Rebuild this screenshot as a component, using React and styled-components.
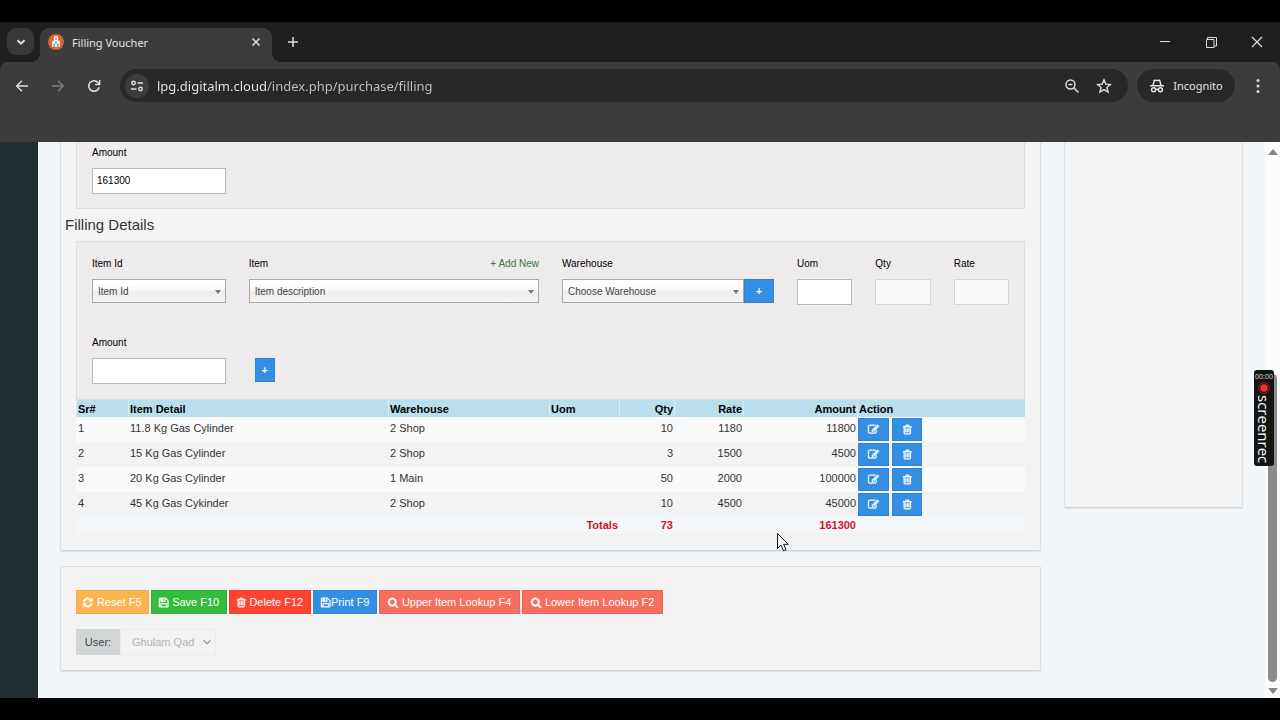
import React from "react";
import styled, { createGlobalStyle, css } from "styled-components";

const Global = createGlobalStyle`
  * { box-sizing: border-box; }
  body { margin: 0; background: #000; font-family: "Liberation Sans", Arial, sans-serif; }
  button, input, select { font-family: inherit; margin: 0; }
  button { cursor: pointer; }
`;

const uiFont = `"Noto Sans", "Open Sans", sans-serif`;

/* ---------- Icons ---------- */

const GLYPHS = {
  search: [1664, "M1152 704q0 185 -131.5 316.5t-316.5 131.5t-316.5 -131.5t-131.5 -316.5t131.5 -316.5t316.5 -131.5t316.5 131.5t131.5 316.5zM1664 -128q0 -52 -38 -90t-90 -38q-54 0 -90 38l-343 342q-179 -124 -399 -124q-143 0 -273.5 55.5t-225 150t-150 225t-55.5 273.5 t55.5 273.5t150 225t225 150t273.5 55.5t273.5 -55.5t225 -150t150 -225t55.5 -273.5q0 -220 -124 -399l343 -343q37 -37 37 -90z"],
  trash: [1408, "M512 800v-576q0 -14 -9 -23t-23 -9h-64q-14 0 -23 9t-9 23v576q0 14 9 23t23 9h64q14 0 23 -9t9 -23zM768 800v-576q0 -14 -9 -23t-23 -9h-64q-14 0 -23 9t-9 23v576q0 14 9 23t23 9h64q14 0 23 -9t9 -23zM1024 800v-576q0 -14 -9 -23t-23 -9h-64q-14 0 -23 9t-9 23v576q0 14 9 23t23 9h64q14 0 23 -9t9 -23zM1152 76v948h-896v-948q0 -22 7 -40.5t14.5 -27t10.5 -8.5h832q3 0 10.5 8.5t14.5 27t7 40.5zM480 1152h448l-48 117q-7 9 -17 11h-317q-10 -2 -17 -11zM1408 1120v-64q0 -14 -9 -23t-23 -9h-96v-948q0 -83 -47 -143.5t-113 -60.5h-832q-66 0 -113 58.5t-47 141.5v952h-96q-14 0 -23 9t-9 23v64q0 14 9 23t23 9h309l70 167q15 37 54 63t79 26h320q40 0 79 -26t54 -63l70 -167h309q14 0 23 -9t9 -23z"],
  edit: [1792, "M888 352l116 116l-152 152l-116 -116v-56h96v-96h56zM1328 1072q-16 16 -33 -1l-350 -350q-17 -17 -1 -33t33 1l350 350q17 17 1 33zM1408 478v-190q0 -119 -84.5 -203.5t-203.5 -84.5h-832q-119 0 -203.5 84.5t-84.5 203.5v832q0 119 84.5 203.5t203.5 84.5h832q63 0 117 -25q15 -7 18 -23q3 -17 -9 -29l-49 -49q-14 -14 -32 -8q-23 6 -45 6h-832q-66 0 -113 -47t-47 -113v-832q0 -66 47 -113t113 -47h832q66 0 113 47t47 113v126q0 13 9 22l64 64q15 15 35 7t20 -29zM1312 1216l288 -288l-672 -672h-288v288zM1756 1084l-92 -92l-288 288l92 92q28 28 68 28t68 -28l152 -152q28 -28 28 -68t-28 -68z"],
  save: [1536, "M384 0h768v384h-768v-384zM1280 0h128v896q0 14 -10 38.5t-20 34.5l-281 281q-10 10 -34 20t-39 10v-416q0 -40 -28 -68t-68 -28h-576q-40 0 -68 28t-28 68v416h-128v-1280h128v416q0 40 28 68t68 28h832q40 0 68 -28t28 -68v-416zM896 928v320q0 13 -9.5 22.5t-22.5 9.5h-192q-13 0 -22.5 -9.5t-9.5 -22.5v-320q0 -13 9.5 -22.5t22.5 -9.5h192q13 0 22.5 9.5t9.5 22.5zM1536 896v-928q0 -40 -28 -68t-68 -28h-1344q-40 0 -68 28t-28 68v1344q0 40 28 68t68 28h928q40 0 88 -20t76 -48l280 -280q28 -28 48 -76t20 -88z"],
  refresh: [1536, "M1511 480q0 -5 -1 -7q-64 -268 -268 -434.5t-478 -166.5q-146 0 -282.5 55t-243.5 157l-129 -129q-19 -19 -45 -19t-45 19t-19 45v448q0 26 19 45t45 19h448q26 0 45 -19t19 -45t-19 -45l-137 -137q71 -66 161 -102t187 -36q134 0 250 65t186 179q11 17 53 117q8 23 30 23h192q13 0 22.5 -9.5t9.5 -22.5zM1536 1280v-448q0 -26 -19 -45t-45 -19h-448q-26 0 -45 19t-19 45t19 45l138 138q-148 137 -349 137q-134 0 -250 -65t-186 -179q-11 -17 -53 -117q-8 -23 -30 -23h-199q-13 0 -22.5 9.5t-9.5 22.5v7q65 268 270 434.5t480 166.5q146 0 284 -55.5t245 -156.5l130 129q19 19 45 19t45 -19t19 -45z"],
};

function Glyph({ name, size = 11 }) {
  const [w, d] = GLYPHS[name];
  return (
    <svg
      height={size}
      width={(size * w) / 1792}
      viewBox={`0 0 ${w} 1792`}
      fill="currentColor"
      stroke="currentColor"
      strokeWidth="70"
      overflow="visible"
      aria-hidden="true"
    >
      <path transform="translate(0 1536) scale(1 -1)" d={d} />
    </svg>
  );
}

const Line = ({ size = 16, sw = 1.5, vb = 16, children }) => (
  <svg width={size} height={size} viewBox={`0 0 ${vb} ${vb}`} fill="none" stroke="currentColor" strokeWidth={sw} aria-hidden="true">
    {children}
  </svg>
);

/* ---------- Browser chrome ---------- */

const Screen = styled.div`
  min-height: 100vh;
  padding: 22px 0;
  display: flex;
  flex-direction: column;
  background: #000;
`;

const TabStrip = styled.header`
  height: 40px;
  display: flex;
  align-items: flex-end;
  background: #1f1f1f;
  padding-left: 7px;
  font-family: ${uiFont};
`;

const ChromeButton = styled.button`
  width: ${(p) => p.$w || 28}px;
  height: ${(p) => p.$h || 28}px;
  flex: none;
  display: flex;
  align-items: center;
  justify-content: center;
  padding: 0;
  border: 0;
  border-radius: ${(p) => p.$radius || 0}px;
  background: ${(p) => p.$bg || "transparent"};
  color: ${(p) => p.$color || "#dedede"};
`;

const TabSearch = styled(ChromeButton)`
  margin-bottom: 7px;
`;

const Tab = styled.div`
  position: relative;
  width: 232px;
  height: 34px;
  margin-left: 6px;
  padding: 0 6px 6px 8px;
  display: flex;
  align-items: center;
  gap: 8px;
  background: #3c3c3c;
  border-radius: 9px 9px 0 0;
  color: #e4e4e4;
  font-size: 11px;

  &::before,
  &::after {
    content: "";
    position: absolute;
    bottom: 0;
    width: 9px;
    height: 9px;
  }
  &::before {
    left: -9px;
    background: radial-gradient(circle at 0 0, transparent 9px, #3c3c3c 9px);
  }
  &::after {
    right: -9px;
    background: radial-gradient(circle at 100% 0, transparent 9px, #3c3c3c 9px);
  }
`;

const TabTitle = styled.span`
  flex: 1;
`;

const NewTab = styled(ChromeButton)`
  margin: 0 auto 6px 7px;
`;

const WindowControls = styled.div`
  display: flex;
  align-self: stretch;
`;

const ToolbarBack = styled.div`
  background: #1f1f1f;
`;

const Toolbar = styled.nav`
  height: 80px;
  padding: 7px 8px;
  display: flex;
  align-items: flex-start;
  background: #3c3c3c;
  border-radius: 8px 8px 0 0;
  font-family: ${uiFont};
`;

const NavButtons = styled.div`
  height: 33px;
  display: flex;
  align-items: center;
  gap: 8px;
  margin-right: 12px;
`;

const Omnibox = styled.div`
  flex: 1;
  min-width: 0;
  height: 33px;
  padding: 0 12px 0 5px;
  display: flex;
  align-items: center;
  gap: 8px;
  background: #282828;
  border-radius: 17px;
`;

const Url = styled.input`
  flex: 1;
  min-width: 0;
  height: 24px;
  padding: 0;
  border: 0;
  outline: 0;
  font-size: 13px;
  color: #e6e6e6;
  background: linear-gradient(to right, #ececec 110px, #c2c2c2 110px);
  -webkit-background-clip: text;
  background-clip: text;
  -webkit-text-fill-color: transparent;
`;

const Incognito = styled.button`
  width: 98px;
  height: 33px;
  margin: 0 9px;
  padding: 0;
  display: flex;
  align-items: center;
  justify-content: center;
  gap: 8px;
  border: 0;
  border-radius: 17px;
  background: #282828;
  color: #e4e4e4;
  font-size: 11px;
`;

/* ---------- Page ---------- */

const Page = styled.div`
  position: relative;
  flex: 1;
  display: flex;
  background: #f3f6f9;
  color: #000;
  font-size: 10px;
`;

const Sidebar = styled.aside`
  width: 38px;
  flex: none;
  background: #222d32;
`;

const Content = styled.main`
  flex: 1;
  min-width: 0;
  padding: 0 22px;
  display: grid;
  grid-template-columns: minmax(0, 1fr) 179px;
  gap: 23px;
  align-items: start;
`;

const Stack = styled.div`
  display: flex;
  flex-direction: column;
  gap: 15px;
`;

const Card = styled.section`
  background: #f3f3f3;
  border: 1px solid #dcdfe2;
  border-bottom-color: #d2d5d8;
  box-shadow: 0 1px 1px rgba(0, 0, 0, 0.08);
  border-radius: 2px;
  ${(p) => p.$cut && css`
    border-top: 0;
    border-radius: 0 0 2px 2px;
  `}
`;

const VoucherCard = styled(Card)`
  padding-bottom: 17px;
`;

const SideCard = styled(Card)`
  height: 366px;
`;

const ActionCard = styled(Card)`
  padding: 23px 15px 15px;
`;

const Panel = styled.div`
  margin: 0 15px;
  padding: ${(p) => (p.$cut ? "4px 15px 14px" : "15px")};
  background: #edebec;
  border: 1px solid #dddddd;
  ${(p) => p.$cut && css`border-top: 0;`}
`;

const Heading = styled.h4`
  margin: 0;
  padding-left: 4px;
  font-size: 15px;
  font-weight: 400;
  line-height: 32px;
  color: #333;
`;

const FormGrid = styled.div`
  display: grid;
  grid-template-columns: repeat(12, minmax(0, 1fr));
  column-gap: 23px;
  row-gap: 31px;
`;

const Field = styled.div`
  grid-column: span ${(p) => p.$span};
  min-height: 48px;
`;

const LabelRow = styled.div`
  display: flex;
  justify-content: space-between;
  margin-bottom: 8px;
  line-height: 14px;
`;

const AddLink = styled.a`
  color: #3c763d;
  text-decoration: none;
`;

const TextInput = styled.input`
  display: block;
  width: 100%;
  height: 26px;
  padding: 0 4px 1px;
  border: 1px solid #b9b9b9;
  border-radius: 0;
  background: #fff;
  color: #000;
  font-size: 10px;
  &:disabled {
    background: #f9f9f9;
    border-color: #d6d6d6;
  }
`;

const Combo = styled.div`
  display: flex;
`;

const SelectBox = styled.div`
  position: relative;
  flex: 1;
  min-width: 0;
  &::after {
    content: "";
    position: absolute;
    right: 5px;
    top: 11px;
    border: 3px solid transparent;
    border-top: 4px solid #777;
    border-bottom: 0;
    pointer-events: none;
  }
`;

const Select = styled.select`
  display: block;
  width: 100%;
  height: 24px;
  padding: 0 5px;
  appearance: none;
  border: 1px solid #aaa;
  border-radius: 0;
  background: linear-gradient(#fff 20%, #f6f6f6 50%, #eeeeee 52%, #f4f4f4 100%);
  color: #444;
  font-size: 10px;
`;

const BlueButton = styled.button`
  width: ${(p) => p.$w}px;
  height: ${(p) => p.$h || 24}px;
  flex: none;
  display: flex;
  align-items: center;
  justify-content: center;
  padding: 0;
  border: 1px solid #2f84d2;
  background: #348fe2;
  color: #fff;
  font-size: 10px;
  font-weight: 700;
`;

const AddRow = styled(Field)`
  padding: 22px 0 0 6px;
`;

const TableWrap = styled.div`
  margin: 0 15px;
`;

const Table = styled.table`
  width: 100%;
  table-layout: fixed;
  border-collapse: separate;
  border-spacing: 0;
  color: #333;
`;

const Col = styled.col`
  width: ${(p) => (p.$w ? `${p.$w}px` : "auto")};
`;

const Th = styled.th`
  height: 17px;
  padding: 0 1px;
  border-left: 1px solid #d9edf6;
  background: #b9deee;
  color: #000;
  font-size: 11px;
  line-height: 16px;
  text-align: ${(p) => (p.$right ? "right" : "left")};
`;

const Td = styled.td`
  height: 25px;
  padding: 0 1px;
  border-left: 1px solid transparent;
  font-size: 11px;
  line-height: 23px;
  vertical-align: top;
  text-align: ${(p) => (p.$right ? "right" : "left")};
`;

const ActionTd = styled(Td)`
  padding: 1px 0;
`;

const Row = styled.tr`
  &:nth-child(odd) { background: #fafafa; }
`;

const TotalRow = styled.tr`
  background: #f2f7fa;
`;

const TotalTd = styled.td`
  height: 16px;
  padding: 0 1px;
  font-size: 11px;
  line-height: 16px;
  font-weight: 700;
  color: #d8101c;
  text-align: right;
`;

const RowActions = styled.div`
  display: flex;
  gap: 3px;
`;

const ButtonBar = styled.div`
  display: flex;
  flex-wrap: wrap;
  gap: 2px;
`;

const ActionButton = styled.button`
  min-width: ${(p) => p.$w}px;
  height: 24px;
  display: flex;
  align-items: center;
  justify-content: center;
  gap: ${(p) => (p.$tight ? 1 : 4)}px;
  padding: 0 5px;
  border: 1px solid rgba(0, 0, 0, 0.06);
  background: ${(p) => p.$bg};
  color: #fff;
  font-size: 11px;
  white-space: nowrap;
`;

const UserGroup = styled.div`
  display: flex;
  margin-top: 15px;
  width: 140px;
  height: 26px;
  font-size: 10px;
`;

const UserLabel = styled.label`
  width: 44px;
  line-height: 26px;
  text-align: center;
  background: #d1d5d6;
  color: #444;
  font-size: 11px;
`;

const UserSelectBox = styled.div`
  position: relative;
  flex: 1;
  svg {
    position: absolute;
    right: 4px;
    top: 8px;
    color: #a0a0a0;
    pointer-events: none;
  }
`;

const UserSelect = styled.select`
  width: 100%;
  height: 26px;
  padding: 0 11px;
  appearance: none;
  border: 1px solid #ebebeb;
  border-radius: 0;
  background: #f3f3f3;
  color: #b4b4b4;
  font-size: 11px;
  opacity: 1;
`;

const Scrollbar = styled.div`
  width: 15px;
  flex: none;
  display: flex;
  flex-direction: column;
  align-items: center;
  padding: 7px 0 4px;
  background: #fcfcfc;
`;

const Arrow = styled.span`
  border: 5px solid transparent;
  ${(p) => (p.$up
    ? css`border-top: 0; border-bottom: 6px solid #858585;`
    : css`border-bottom: 0; border-top: 6px solid #858585;`)}
`;

const Thumb = styled.span`
  width: 9px;
  height: 308px;
  margin: auto 0 6px;
  border-radius: 5px;
  background: #8b8b8b;
`;

const Recorder = styled.div`
  position: absolute;
  right: 6px;
  top: 228px;
  width: 20px;
  height: 96px;
  display: flex;
  flex-direction: column;
  align-items: center;
  gap: 1px;
  padding-top: 3px;
  background: #141414;
  border-radius: 3px;
  color: #fff;
  font-family: "Open Sans", sans-serif;
`;

const RecTime = styled.span`
  font-size: 7px;
  line-height: 8px;
  color: #ddd;
`;

const RecName = styled.span`
  writing-mode: vertical-rl;
  font-size: 15px;
  line-height: 20px;
`;

const Pointer = styled.svg`
  position: absolute;
  left: 776px;
  top: 390px;
`;

/* ---------- Data ---------- */

const COLS = [52, 260, 161, 70, 55, 69, 114, 0];

const HEADERS = [
  ["Sr#"], ["Item Detail"], ["Warehouse"], ["Uom"],
  ["Qty", true], ["Rate", true], ["Amount", true], ["Action"],
];

const ROWS = [
  ["11.8 Kg Gas Cylinder", "2 Shop", 10, 1180, 11800],
  ["15 Kg Gas Cylinder", "2 Shop", 3, 1500, 4500],
  ["20 Kg Gas Cylinder", "1 Main", 50, 2000, 100000],
  ["45 Kg Gas Cykinder", "2 Shop", 10, 4500, 45000],
];

const ACTIONS = [
  ["Reset F5", "refresh", "#fbb450", 73],
  ["Save F10", "save", "#34bc3c", 76],
  ["Delete F12", "trash", "#ff4231", 82],
  ["Print F9", "save", "#348fe2", 64, true],
  ["Upper Item Lookup F4", "search", "#f76d5e", 141],
  ["Lower Item Lookup F2", "search", "#f76d5e", 141],
];

/* ---------- Parts ---------- */

function InputField({ id, label, span, value = "", disabled }) {
  return (
    <Field $span={span}>
      <LabelRow><label htmlFor={id}>{label}</label></LabelRow>
      <TextInput id={id} defaultValue={value} disabled={disabled} />
    </Field>
  );
}

function SelectField({ id, label, span, option, link, extra }) {
  return (
    <Field $span={span}>
      <LabelRow>
        <label htmlFor={id}>{label}</label>
        {link}
      </LabelRow>
      <Combo>
        <SelectBox>
          <Select id={id}><option>{option}</option></Select>
        </SelectBox>
        {extra}
      </Combo>
    </Field>
  );
}

function BrowserChrome() {
  return (
    <>
      <TabStrip>
        <TabSearch $w={27} $h={27} $radius={9} $bg="#383838" aria-label="Search tabs">
          <Line size={10} sw={2} vb={10}><path d="M1.5 3.2 5 6.7 8.5 3.2" /></Line>
        </TabSearch>
        <Tab>
          <svg width="16" height="16" viewBox="0 0 16 16" aria-hidden="true">
            <circle cx="8" cy="8" r="8" fill="#d9652f" />
            <circle cx="8" cy="4.400" r="2.300" fill="#f4f4f4" />
            <path d="M4 13V8.400Q4 6.200 8 6t4 2.400V13z" fill="#f1f5f5" />
            <path d="M7.200 3.500h1.600v2.200H7.200zM5.600 9.500h1.200V13H5.600zM9.200 9.500h1.200V13H9.200zM7.500 7h1v3h-1z" fill="#5f9ba0" />
          </svg>
          <TabTitle>Filling Voucher</TabTitle>
          <ChromeButton $w={20} $h={20} aria-label="Close tab">
            <Line size={10} vb={10}><path d="M1.500 1.500l7 7M8.500 1.500l-7 7" /></Line>
          </ChromeButton>
        </Tab>
        <NewTab aria-label="New tab">
          <Line size={12} vb={12}><path d="M6 1v10M1 6h10" /></Line>
        </NewTab>
        <WindowControls>
          <ChromeButton $w={46} $h={40} aria-label="Minimize">
            <Line size={12} vb={12} sw={1}><path d="M1 5.500h10" /></Line>
          </ChromeButton>
          <ChromeButton $w={46} $h={40} aria-label="Restore">
            <Line size={12} vb={12} sw={1}><path d="M1.500 3.500h7.500V11.500H1.500zM2.500 3.500V1.500h9V10H9" /></Line>
          </ChromeButton>
          <ChromeButton $w={46} $h={40} aria-label="Close">
            <Line size={12} vb={12} sw={1.200}><path d="M1 1l10 10M11 1L1 11" /></Line>
          </ChromeButton>
        </WindowControls>
      </TabStrip>
      <ToolbarBack>
        <Toolbar>
          <NavButtons>
            <ChromeButton aria-label="Back">
              <Line size={14} vb={14}><path d="M13 7H2M7 1.700 1.700 7 7 12.300" /></Line>
            </ChromeButton>
            <ChromeButton $color="#7d7d7d" aria-label="Forward">
              <Line size={14} vb={14}><path d="M1 7h11M7 1.700 12.300 7 7 12.300" /></Line>
            </ChromeButton>
            <ChromeButton aria-label="Reload">
              <Line size={14} vb={14}><path d="M12.200 8.200A5.300 5.300 0 1 1 11 3.400L12.500 5M12.600 1v4.400H8.200" /></Line>
            </ChromeButton>
          </NavButtons>
          <Omnibox>
            <ChromeButton $w={24} $h={24} $radius={12} $bg="#3c3c3c" aria-label="Site information">
              <Line size={14} vb={14}>
                <circle cx="3.500" cy="4" r="1.700" />
                <path d="M7.500 4h5.500M1 10h5.500" />
                <circle cx="10.500" cy="10" r="1.700" />
              </Line>
            </ChromeButton>
            <Url aria-label="Address" defaultValue="lpg.digitalm.cloud/index.php/purchase/filling" spellCheck={false} />
            <ChromeButton $w={24} $h={24} aria-label="Zoom">
              <Line size={16} vb={16}><circle cx="6.500" cy="6.500" r="4.500" /><path d="M10 10l4.500 4.500M4.500 6.500h4" /></Line>
            </ChromeButton>
            <ChromeButton $w={24} $h={24} aria-label="Bookmark">
              <Line size={16} vb={16} sw={1.400}>
                <path d="M8 1.900l1.800 4.200 4.600.4-3.500 3 1.100 4.500L8 11.600 4 14l1.100-4.500-3.500-3 4.600-.4z" />
              </Line>
            </ChromeButton>
          </Omnibox>
          <Incognito>
            <Line size={16} vb={16}>
              <path d="M1 7.800h14M4 7.600l1.200-4.800q.2-.8 1-.6l1.800.4 1.800-.4q.8-.2 1 .6L12 7.600" />
              <circle cx="4.600" cy="11.800" r="2" /><circle cx="11.400" cy="11.800" r="2" />
              <path d="M6.500 11.600q1.500-.8 3 0" />
            </Line>
            Incognito
          </Incognito>
          <ChromeButton $h={33} aria-label="Menu">
            <svg width="4" height="16" viewBox="0 0 4 16" fill="currentColor" aria-hidden="true">
              <circle cx="2" cy="2.500" r="1.500" /><circle cx="2" cy="8" r="1.500" /><circle cx="2" cy="13.500" r="1.500" />
            </svg>
          </ChromeButton>
        </Toolbar>
      </ToolbarBack>
    </>
  );
}

function ItemsTable() {
  return (
    <TableWrap>
      <Table>
        <colgroup>{COLS.map((w, i) => <Col key={i} $w={w} />)}</colgroup>
        <thead>
          <tr>{HEADERS.map(([text, right]) => <Th key={text} $right={right}>{text}</Th>)}</tr>
        </thead>
        <tbody>
          {ROWS.map(([item, warehouse, qty, rate, amount], i) => (
            <Row key={item}>
              <Td>{i + 1}</Td>
              <Td>{item}</Td>
              <Td>{warehouse}</Td>
              <Td />
              <Td $right>{qty}</Td>
              <Td $right>{rate}</Td>
              <Td $right>{amount}</Td>
              <ActionTd>
                <RowActions>
                  <BlueButton $w={31} $h={23} aria-label={`Edit ${item}`}><Glyph name="edit" /></BlueButton>
                  <BlueButton $w={30} $h={23} aria-label={`Delete ${item}`}><Glyph name="trash" /></BlueButton>
                </RowActions>
              </ActionTd>
            </Row>
          ))}
        </tbody>
        <tfoot>
          <TotalRow>
            <TotalTd colSpan={4}>Totals</TotalTd>
            <TotalTd>73</TotalTd>
            <TotalTd />
            <TotalTd>161300</TotalTd>
            <TotalTd />
          </TotalRow>
        </tfoot>
      </Table>
    </TableWrap>
  );
}

export default function App() {
  return (
    <Screen>
      <Global />
      <BrowserChrome />
      <Page>
        <Sidebar />
        <Content>
          <Stack>
            <VoucherCard $cut>
              <Panel $cut>
                <FormGrid>
                  <InputField id="total-amount" label="Amount" span={2} value="161300" />
                </FormGrid>
              </Panel>
              <Heading>Filling Details</Heading>
              <Panel>
                <FormGrid>
                  <SelectField id="item-id" label="Item Id" span={2} option="Item Id" />
                  <SelectField
                    id="item"
                    label="Item"
                    span={4}
                    option="Item description"
                    link={<AddLink href="#add-item">+ Add New</AddLink>}
                  />
                  <SelectField
                    id="warehouse"
                    label="Warehouse"
                    span={3}
                    option="Choose Warehouse"
                    extra={<BlueButton type="button" $w={30}>+</BlueButton>}
                  />
                  <InputField id="uom" label="Uom" span={1} />
                  <InputField id="qty" label="Qty" span={1} disabled />
                  <InputField id="rate" label="Rate" span={1} disabled />
                  <InputField id="amount" label="Amount" span={2} />
                  <AddRow $span={2}>
                    <BlueButton type="button" $w={20}>+</BlueButton>
                  </AddRow>
                </FormGrid>
              </Panel>
              <ItemsTable />
            </VoucherCard>
            <ActionCard>
              <ButtonBar>
                {ACTIONS.map(([text, icon, bg, w, tight]) => (
                  <ActionButton key={text} $bg={bg} $w={w} $tight={tight}>
                    <Glyph name={icon} />
                    {text}
                  </ActionButton>
                ))}
              </ButtonBar>
              <UserGroup>
                <UserLabel htmlFor="user">User:</UserLabel>
                <UserSelectBox>
                  <UserSelect id="user" disabled><option>Ghulam Qad</option></UserSelect>
                  <Line size={10} sw={1.600} vb={10}><path d="M1.500 3.200 5 6.700 8.500 3.200" /></Line>
                </UserSelectBox>
              </UserGroup>
            </ActionCard>
          </Stack>
          <SideCard $cut />
        </Content>
        <Scrollbar>
          <Arrow $up />
          <Thumb />
          <Arrow />
        </Scrollbar>
        <Recorder>
          <RecTime>00:00</RecTime>
          <svg width="12" height="12" viewBox="0 0 12 12" aria-hidden="true">
            <circle cx="6" cy="6" r="5.400" fill="none" stroke="#a3232b" />
            <circle cx="6" cy="6" r="3.800" fill="#f0323c" />
          </svg>
          <RecName>screenrec</RecName>
        </Recorder>
        <Pointer width="13" height="20" viewBox="0 0 13 20" aria-hidden="true">
          <path d="M1.500 1.500v15l3.600-3.300 2.400 5.600 2.500-1.100-2.400-5.400h4.600z" fill="#fff" stroke="#111" />
        </Pointer>
      </Page>
    </Screen>
  );
}
